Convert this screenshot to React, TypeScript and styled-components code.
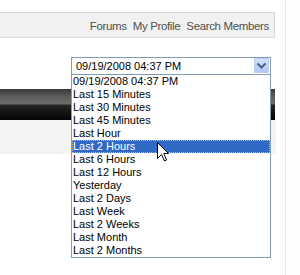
import * as React from "react";
import styled, { createGlobalStyle } from "styled-components";

const GlobalStyle = createGlobalStyle`
  html, body {
    margin: 0;
    padding: 0;
    background: #fdfdfd;
  }
  body {
    font-family: "Liberation Sans", Arial, sans-serif;
    font-size: 11px;
  }
`;

const Page = styled.div`
  box-sizing: border-box;
  width: 286px;
  height: 275px;
  padding: 12px 10px 0 0;
  border-right: 1px solid #e6e6e6;
  background: #ffffff;
`;

const NavBar = styled.nav`
  box-sizing: border-box;
  height: 26px;
  display: flex;
  justify-content: flex-end;
  align-items: center;
  gap: 6px;
  padding: 1px 5px 0 0;
  background: #f1f1f1;
  border: 1px solid #d9d9d9;
  border-left: none;
`;

const NavLink = styled.span`
  color: #505050;
  font-size: 11.5px;
  letter-spacing: -0.35px;
  cursor: pointer;
`;

const SelectRow = styled.div`
  margin-top: 19px;
  display: flex;
  justify-content: flex-end;
  padding-right: 4px;
`;

const SelectBox = styled.div`
  position: relative;
  box-sizing: border-box;
  width: 200px;
  height: 18px;
  display: flex;
  align-items: center;
  padding: 0 1px 0 4px;
  border: 1px solid #7f9db9;
  background: #ffffff;
  color: #000000;
  line-height: 13px;
`;

const SelectValue = styled.span`
  flex: 1;
`;

const DropButton = styled.span`
  box-sizing: border-box;
  align-self: flex-start;
  width: 15px;
  height: 15px;
  display: flex;
  align-items: center;
  justify-content: center;
  border: 1px solid #bccbf4;
  border-radius: 1px;
  background: linear-gradient(#d3e0fc, #b3c7f6);
`;

const DropList = styled.ul`
  position: absolute;
  left: -1px;
  top: 16px;
  z-index: 2;
  box-sizing: border-box;
  width: 200px;
  margin: 0;
  padding: 0;
  list-style: none;
  border: 1px solid #7f9db9;
  background: #ffffff;
`;

const Option = styled.li<{ $active?: boolean }>`
  position: relative;
  height: 13px;
  line-height: 13px;
  padding-left: 1px;
  white-space: nowrap;
  color: ${(p) => (p.$active ? "#ffffff" : "#000000")};
  background: ${(p) => (p.$active ? "#316ac5" : "transparent")};
  outline: ${(p) => (p.$active ? "1px dotted #e8b84a" : "none")};
  outline-offset: -1px;
`;

const Pointer = styled.svg`
  position: absolute;
  left: 85px;
  top: 2px;
`;

const DarkBar = styled.div`
  margin-top: 14px;
  height: 31px;
  width: 275px;
  background: linear-gradient(
    to bottom,
    #3a3a3a 0%,
    #5c5c5c 25%,
    #6c6c6c 48%,
    #262626 52%,
    #141414 75%,
    #050505 100%
  );
`;

const GrayPanel = styled.div`
  height: 34px;
  width: 276px;
  background: #f3f3f3;
`;

const options = [
  "09/19/2008 04:37 PM",
  "Last 15 Minutes",
  "Last 30 Minutes",
  "Last 45 Minutes",
  "Last Hour",
  "Last 2 Hours",
  "Last 6 Hours",
  "Last 12 Hours",
  "Yesterday",
  "Last 2 Days",
  "Last Week",
  "Last 2 Weeks",
  "Last Month",
  "Last 2 Months",
];

export default function App(): JSX.Element {
  const hovered = 5;
  return (
    <>
      <GlobalStyle />
      <Page>
        <NavBar>
          <NavLink>Forums</NavLink>
          <NavLink>My Profile</NavLink>
          <NavLink>Search Members</NavLink>
        </NavBar>
        <SelectRow>
          <SelectBox>
            <SelectValue>{options[0]}</SelectValue>
            <DropButton>
              <svg width="13" height="13" viewBox="0 0 13 13">
                <polyline
                  points="2.5,4.5 6.5,8.5 10.5,4.5"
                  fill="none"
                  stroke="#4d6185"
                  strokeWidth="2"
                />
              </svg>
            </DropButton>
            <DropList>
              {options.map((o, i) => (
                <Option key={o} $active={i === hovered}>
                  {o}
                  {i === hovered && (
                    <Pointer width="13" height="20" viewBox="0 0 13 20">
                      <path
                        d="M0.5 0.5 L0.5 16.5 L4.5 12.5 L7.5 19 L9.5 18 L6.8 11.5 L11.5 11.5 Z"
                        fill="#ffffff"
                        stroke="#000000"
                        strokeWidth="1"
                      />
                    </Pointer>
                  )}
                </Option>
              ))}
            </DropList>
          </SelectBox>
        </SelectRow>
        <DarkBar />
        <GrayPanel />
      </Page>
    </>
  );
}
